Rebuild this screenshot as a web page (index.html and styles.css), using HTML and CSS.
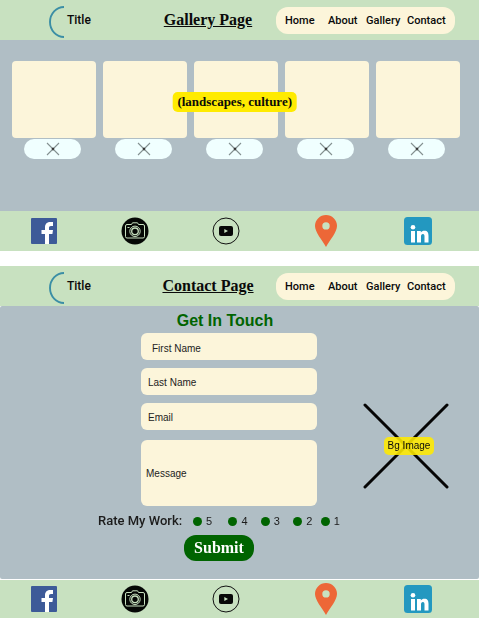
FILE: index.html
```html
<!DOCTYPE html>
<html lang="en">
<head>
<meta charset="utf-8">
<meta name="viewport" content="width=device-width, initial-scale=1">
<title>Gallery and Contact</title>
<link rel="stylesheet" href="styles.css">
</head>
<body>
<svg class="sprite" aria-hidden="true">
  <symbol id="arc" viewBox="0 0 16 32"><path d="M15 1A14 15 0 0 0 15 31" fill="none" stroke="#3b8ea5" stroke-width="1.900"/></symbol>
  <symbol id="cross" viewBox="0 0 14 14"><path d="M1 1L13 13M13 1L1 13" stroke="#849090" stroke-width="1.1"/><path d="M6 6L8 8M8 6L6 8" stroke="#333" stroke-width="1.2"/></symbol>
  <symbol id="facebook" viewBox="0 0 26 26"><rect width="26" height="26" rx="1" fill="#3d5a98"/><path d="M14 26V16h-3.500v-4H14V9.500C14 5.800 16.200 4 19.500 4H22v4h-2c-1.500 0-2 .7-2 2v2h4l-.6 4H18v10z" fill="#fff"/></symbol>
  <symbol id="camera" viewBox="0 0 28 28"><circle cx="14" cy="14" r="13.500" fill="#060806"/><g fill="none" stroke="#c8e1c0" stroke-width="1"><path d="M6 7.500h4.500l1-1.700h5l1 1.700H22q1.500 0 1.500 1.500v10.500q0 1.500-1.500 1.500H6q-1.500 0-1.500-1.500V9q0-1.500 1.500-1.500z"/><circle cx="14" cy="14.300" r="5.200"/><circle cx="14" cy="14.300" r="3.300" stroke-width="1.300"/><path d="M6.500 10.500h2"/></g></symbol>
  <symbol id="youtube" viewBox="0 0 28 28"><circle cx="14" cy="14" r="13" fill="none" stroke="#111" stroke-width="1"/><rect x="7" y="9" width="14" height="10" rx="2" fill="#080808"/><path d="M12.300 12v4l3.700-2z" fill="#c8e1c0"/></symbol>
  <symbol id="pin" viewBox="0 0 22 32"><path fill-rule="evenodd" d="M11 0a11 11 0 0 1 11 11c0 6-7 14-11 21C7 25 0 17 0 11A11 11 0 0 1 11 0zm0 7.200a3.700 3.700 0 1 0 0 7.400a3.700 3.700 0 1 0 0-7.400z" fill="#ed6737"/></symbol>
  <symbol id="linkedin" viewBox="0 0 28 28"><rect width="28" height="28" rx="3.500" fill="#2398c0"/><g fill="#fff"><circle cx="9" cy="10.200" r="2.300"/><path d="M7 14h4v11.500H7zM13 14h3.800v1.600c.8-1.300 2-1.900 3.600-1.900 3.200 0 4.100 2 4.100 5v6.800h-4v-6c0-1.600-.3-2.600-1.600-2.600-1.400 0-1.900 1-1.900 2.600v6h-4z"/></g></symbol>
</svg>

<section class="page">
  <header class="bar">
    <div class="brand"><svg class="arc"><use href="#arc"/></svg><span>Title</span></div>
    <h1 class="heading">Gallery Page</h1>
    <nav class="nav"><a href="#">Home</a><a href="#">About</a><a href="#">Gallery</a><a href="#contact">Contact</a></nav>
  </header>
  <main class="gallery">
    <div class="cards">
      <div class="card"></div><div class="card"></div><div class="card"></div><div class="card"></div><div class="card"></div>
      <p class="topic">(landscapes, culture)</p>
    </div>
    <div class="captions">
      <span class="caption"><svg class="cross"><use href="#cross"/></svg></span>
      <span class="caption"><svg class="cross"><use href="#cross"/></svg></span>
      <span class="caption"><svg class="cross"><use href="#cross"/></svg></span>
      <span class="caption"><svg class="cross"><use href="#cross"/></svg></span>
      <span class="caption"><svg class="cross"><use href="#cross"/></svg></span>
    </div>
  </main>
  <footer class="social">
    <a href="#" aria-label="Facebook"><svg class="icon icon-square"><use href="#facebook"/></svg></a>
    <a href="#" aria-label="Photos"><svg class="icon"><use href="#camera"/></svg></a>
    <a href="#" aria-label="YouTube"><svg class="icon"><use href="#youtube"/></svg></a>
    <a href="#" aria-label="Location"><svg class="icon icon-pin"><use href="#pin"/></svg></a>
    <a href="#" aria-label="LinkedIn"><svg class="icon"><use href="#linkedin"/></svg></a>
  </footer>
</section>

<section class="page" id="contact">
  <header class="bar">
    <div class="brand"><svg class="arc"><use href="#arc"/></svg><span>Title</span></div>
    <h1 class="heading">Contact Page</h1>
    <nav class="nav"><a href="#">Home</a><a href="#">About</a><a href="#">Gallery</a><a href="#contact">Contact</a></nav>
  </header>
  <main class="contact">
    <form class="form">
      <h2 class="form-title">Get In Touch</h2>
      <div class="fields">
        <input class="field field-first" type="text" placeholder="First Name" aria-label="First Name">
        <input class="field" type="text" placeholder="Last Name" aria-label="Last Name">
        <input class="field" type="email" placeholder="Email" aria-label="Email">
        <textarea class="field field-message" placeholder="Message" aria-label="Message"></textarea>
      </div>
      <fieldset class="rating">
        <legend class="rating-title">Rate My Work:</legend>
        <div class="rates">
          <label class="rate"><input type="radio" name="rate" value="5">5</label>
          <label class="rate"><input type="radio" name="rate" value="4">4</label>
          <label class="rate"><input type="radio" name="rate" value="3">3</label>
          <label class="rate"><input type="radio" name="rate" value="2">2</label>
          <label class="rate"><input type="radio" name="rate" value="1">1</label>
        </div>
      </fieldset>
      <button class="submit" type="submit">Submit</button>
    </form>
    <div class="art">
      <svg class="art-cross" viewBox="0 0 86 86" aria-hidden="true"><path d="M2 2L84 84M84 2L2 84" stroke="#050505" stroke-width="3" stroke-linecap="round"/></svg>
      <span class="art-label">Bg Image</span>
    </div>
  </main>
  <footer class="social">
    <a href="#" aria-label="Facebook"><svg class="icon icon-square"><use href="#facebook"/></svg></a>
    <a href="#" aria-label="Photos"><svg class="icon"><use href="#camera"/></svg></a>
    <a href="#" aria-label="YouTube"><svg class="icon"><use href="#youtube"/></svg></a>
    <a href="#" aria-label="Location"><svg class="icon icon-pin"><use href="#pin"/></svg></a>
    <a href="#" aria-label="LinkedIn"><svg class="icon"><use href="#linkedin"/></svg></a>
  </footer>
</section>
</body>
</html>
```
FILE: styles.css
```css
* { box-sizing: border-box; }

body {
  margin: 0;
  padding-right: 1px;
  background: #fff;
  color: #0a0a0a;
  font-family: Roboto, "Noto Sans", sans-serif;
}

h1, h2, p, fieldset, legend { margin: 0; padding: 0; border: 0; }
a { color: inherit; text-decoration: none; }
svg { display: block; }
.sprite { position: absolute; width: 0; height: 0; }

.page + .page { margin-top: 15px; }

.bar {
  display: grid;
  grid-template-columns: 140fr 136fr 179fr 24fr;
  align-items: center;
  height: 40px;
  background: #c8e1c0;
}

.brand {
  display: flex;
  align-items: center;
  gap: 2px;
  padding-left: 35%;
  font-size: 12px;
  font-weight: 500;
}
.arc { width: 16px; height: 32px; margin-top: 3px; }

.heading {
  text-align: center;
  white-space: nowrap;
  font: bold 16px/20px "Liberation Serif", serif;
  text-decoration: underline;
}

.nav {
  display: grid;
  grid-template-columns: 43fr 38fr 41fr 48fr;
  align-items: center;
  height: 27px;
  padding-left: 9px;
  border-radius: 12px;
  background: #fcf5da;
  font-size: 11px;
  font-weight: 500;
}

.gallery {
  height: 171px;
  padding-top: 21px;
  background: #b0bec5;
}
.cards {
  position: relative;
  display: grid;
  grid-template-columns: repeat(5, 1fr);
  gap: 7px;
  padding: 0 19px 0 12px;
}
.card { height: 77px; border-radius: 4px; background: #fcf5da; }
.topic {
  position: absolute;
  top: 31px;
  left: 49%;
  transform: translateX(-50%);
  padding: 0 5px;
  border-radius: 5px;
  background: #ffeb00;
  font: bold 13px/20px "Liberation Serif", serif;
  white-space: nowrap;
}
.captions {
  display: flex;
  justify-content: space-between;
  padding: 1px 34px 0 24px;
}
.caption {
  display: grid;
  place-items: center;
  width: 57px;
  height: 20px;
  border-radius: 10px;
  background: #f0ffff;
}
.cross { width: 14px; height: 14px; }

.social {
  display: grid;
  grid-template-columns: 87fr 95fr 87fr 114fr 70fr 26fr;
  align-items: center;
  justify-items: center;
  height: 40px;
  background: #c8e1c0;
}
.icon { width: 28px; height: 28px; }
.icon-square { width: 26px; height: 26px; }
.icon-pin { width: 22px; height: 32px; }

.contact {
  display: grid;
  grid-template-columns: 98fr 242fr 132fr 7fr;
  height: 273px;
  margin-bottom: 1px;
  border-radius: 2px;
  background: #b0bec5;
}
.contact + .social { height: 38px; }

.form {
  grid-column: 2;
  display: flex;
  flex-direction: column;
  align-items: center;
  padding-top: 5px;
}
.form-title {
  padding-left: 12px;
  color: #006400;
  font: bold 16px/20px "Liberation Sans", sans-serif;
}
.fields {
  display: flex;
  flex-direction: column;
  gap: 8px;
  align-self: stretch;
  margin-top: 2px;
  padding: 0 23px 0 43px;
}
.field {
  display: block;
  width: 100%;
  height: 27px;
  padding: 2px 7px 0;
  border: 0;
  border-radius: 6px;
  background: #fcf5da;
  color: #222;
  font: 10px/14px "Liberation Sans", sans-serif;
  resize: none;
}
.field::placeholder { color: #222; opacity: 1; }
.field-first { padding: 4px 11px 0; }
.field-message { height: 66px; margin-top: 2px; padding: 27px 5px; }

.rating {
  display: flex;
  align-items: center;
  align-self: stretch;
  margin-top: 5px;
}
.rating-title {
  float: left;
  width: 95px;
  white-space: nowrap;
  color: #1c1c1c;
  font: 500 13px/20px Roboto, sans-serif;
}
.rates {
  flex: 1;
  display: grid;
  grid-template-columns: 36fr 33fr 33fr 28fr 17fr;
}
.rate {
  display: flex;
  align-items: center;
  gap: 4px;
  color: #1c1c1c;
  font: 11px/20px "Liberation Sans", sans-serif;
}
.rate input {
  appearance: none;
  width: 9px;
  height: 9px;
  margin: 0;
  border-radius: 50%;
  background: #006400;
}

.submit {
  height: 26px;
  margin-top: 4px;
  padding: 0 10px;
  border: 0;
  border-radius: 12px;
  background: #006400;
  color: #fff;
  font: bold 16px/20px "Liberation Serif", serif;
}

.art {
  grid-column: 3;
  display: grid;
  place-items: center;
  padding-top: 7px;
}
.art > * { grid-area: 1 / 1; }
.art-cross { width: 86px; height: 86px; }
.art-label {
  padding: 0 4px;
  margin-left: 6px;
  border-radius: 5px;
  background: rgba(255, 235, 0, 0.88);
  font: 10px/18px "Liberation Sans", sans-serif;
}
```
